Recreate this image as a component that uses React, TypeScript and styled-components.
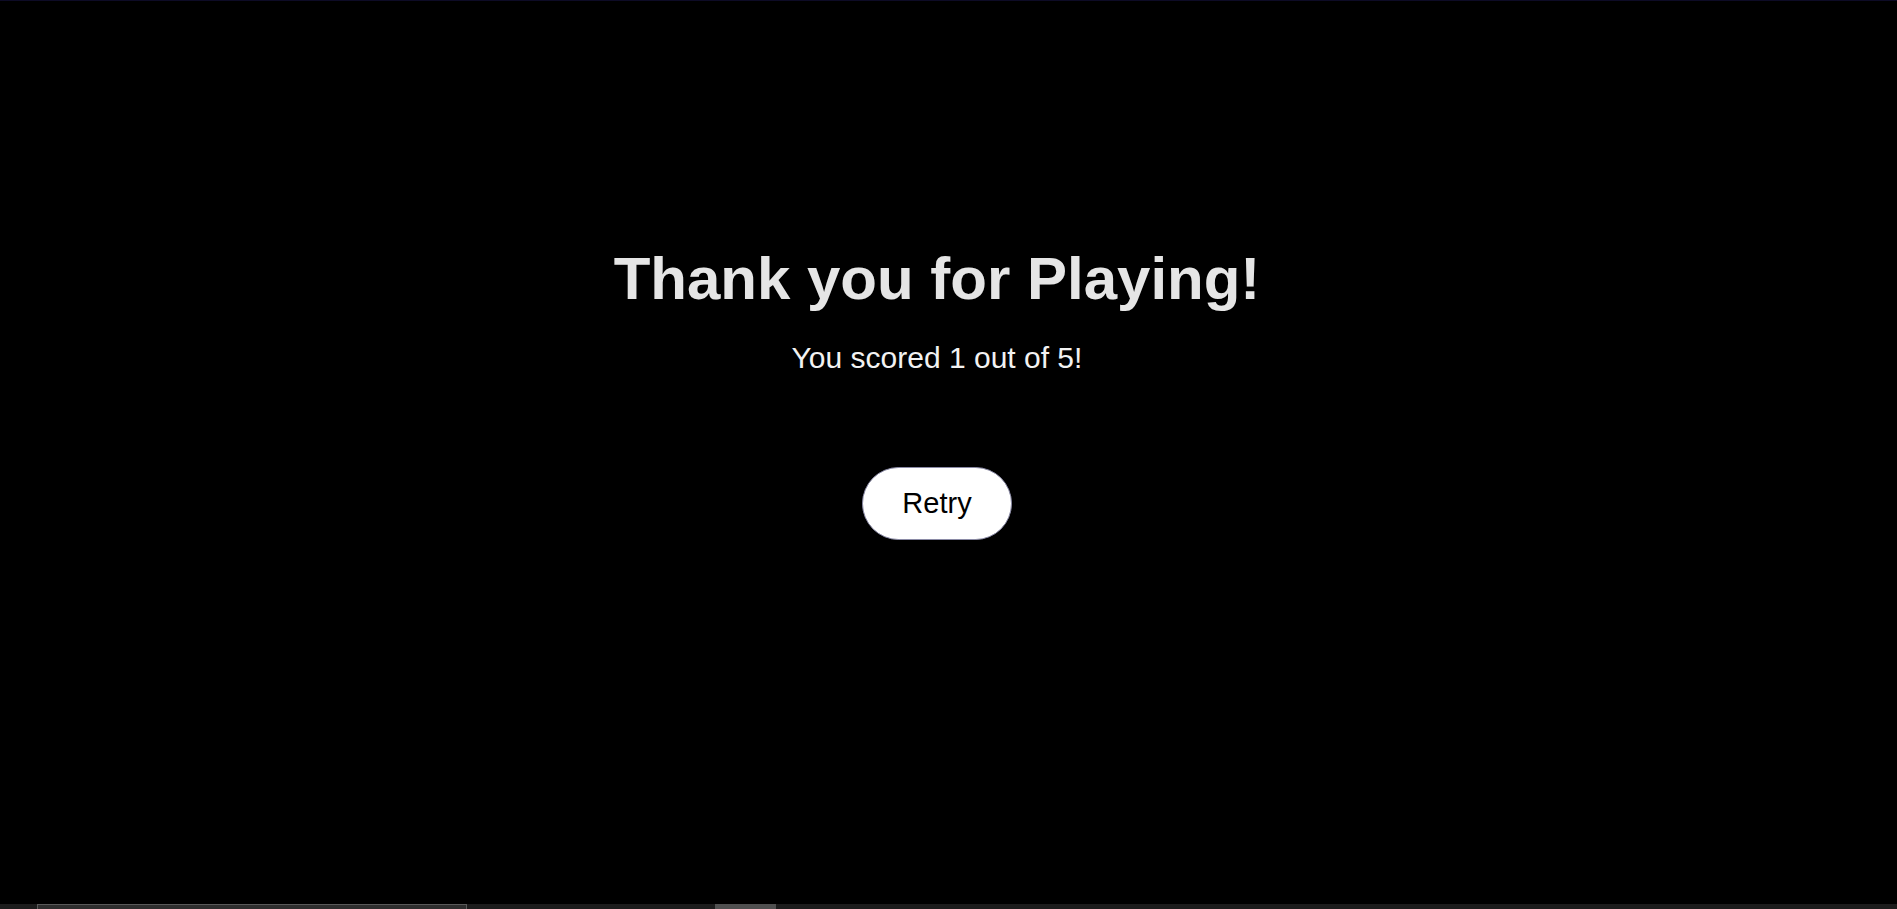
import React from "react";
import styled, { createGlobalStyle } from "styled-components";

const Global = createGlobalStyle`
  html, body { margin: 0; padding: 0; background: #000; }
  body { font-family: "Liberation Sans", Arial, sans-serif; overflow: hidden; }
`;

const Page = styled.div`
  display: flex;
  flex-direction: column;
  height: 909px;
  background: #000;
`;

const TopLine = styled.div`
  height: 1px;
  background: #0d0b26;
  flex: none;
`;

const Main = styled.main`
  flex: 1;
  display: flex;
  flex-direction: column;
  align-items: center;
  padding: 243px 23px 0 0;
`;

const Title = styled.h1`
  margin: 0;
  font-size: 60px;
  font-weight: 700;
  color: #e5e5e5;
  line-height: normal;
`;

const Score = styled.p`
  margin: 28px 0 0;
  font-size: 30px;
  color: #f2f2f2;
  line-height: normal;
`;

const RetryButton = styled.button`
  margin-top: 92px;
  height: 73px;
  padding: 0 39px;
  border-radius: 37px;
  border: 1px solid #8a8aa6;
  background: #fff;
  color: #000;
  font-family: "Liberation Sans", Arial, sans-serif;
  font-size: 29px;
  cursor: pointer;
`;

const BottomBar = styled.div`
  height: 5px;
  flex: none;
  background: #1c1c1c;
  display: flex;
  align-items: stretch;
`;

const Segment = styled.div<{ $left: number; $width: number; $bg: string; $border?: boolean }>`
  margin-left: ${(p) => p.$left}px;
  width: ${(p) => p.$width}px;
  background: ${(p) => p.$bg};
  box-sizing: border-box;
  ${(p) => (p.$border ? "border: 1px solid #5a5a5a; border-bottom: none;" : "")}
`;

export default function App() {
  return (
    <>
      <Global />
      <Page>
        <TopLine />
        <Main>
          <Title>Thank you for Playing!</Title>
          <Score>You scored 1 out of 5!</Score>
          <RetryButton>Retry</RetryButton>
        </Main>
        <BottomBar>
          <Segment $left={37} $width={430} $bg="#2e2e2e" $border />
          <Segment $left={248} $width={61} $bg="#505050" />
        </BottomBar>
      </Page>
    </>
  );
}
